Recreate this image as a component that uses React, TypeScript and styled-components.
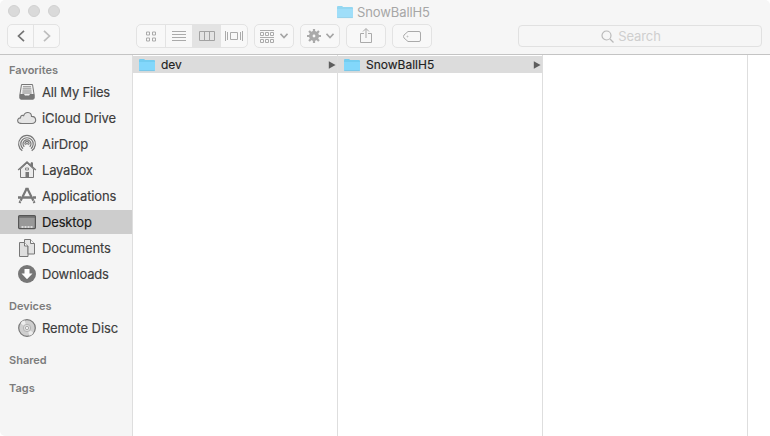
import React from "react";
import styled, { createGlobalStyle } from "styled-components";

const GlobalStyle = createGlobalStyle`
  * { box-sizing: border-box; }
  body { margin: 0; background: #fff; overflow: hidden; font-family: Inter, "Liberation Sans", sans-serif; }
  svg { display: block; flex: none; }
`;

const Window = styled.div`
  display: flex;
  flex-direction: column;
  width: 770px;
  height: 436px;
  border-radius: 5px;
  overflow: hidden;
  background: #fff;
`;

const Header = styled.header`
  flex: none;
  height: 55px;
  background: #f6f6f6;
  border-bottom: 1px solid #c4c4c4;
`;

const TitleBar = styled.div`
  display: grid;
  grid-template-columns: 337px 1fr;
  align-items: center;
  height: 24px;
`;

const Lights = styled.div`
  display: flex;
  gap: 8px;
  padding: 0 0 2px 8px;
`;

const Light = styled.span`
  width: 12px;
  height: 12px;
  border-radius: 50%;
  background: #dadada;
  border: 1px solid #d0d0d0;
`;

const Title = styled.div`
  display: flex;
  align-items: center;
  gap: 4px;
  height: 23px;
  font-size: 13px;
  line-height: 23px;
  color: #a6a6a6;
`;

const Text = styled.span<{ $track?: number }>`
  white-space: nowrap;
  letter-spacing: ${(p) => p.$track ?? 0}px;
`;

const Toolbar = styled.div`
  display: flex;
  align-items: flex-start;
  padding-left: 7px;
`;

const Group = styled.div<{ $after: number }>`
  display: flex;
  height: 24px;
  border: 1px solid #e3e3e3;
  border-radius: 5px;
  margin-right: ${(p) => p.$after}px;
  overflow: hidden;
  background: #f8f8f8;
`;

const ToolButton = styled.button<{ $w: number; $active?: boolean }>`
  display: flex;
  align-items: center;
  justify-content: center;
  width: ${(p) => p.$w}px;
  padding: 0;
  border: 0;
  background: ${(p) => (p.$active ? "#e3e3e3" : "transparent")};
  & + & { border-left: 1px solid #e3e3e3; }
`;

const Search = styled.div`
  display: flex;
  align-items: center;
  justify-content: center;
  gap: 4px;
  width: 244px;
  height: 22px;
  margin-top: 1px;
  padding-right: 34px;
  padding-left: 16px;
  border: 1px solid #e1e1e1;
  border-radius: 4px;
  font-size: 13px;
  color: #cfcfcf;
`;

const Body = styled.div`
  display: flex;
  flex: 1;
  min-height: 0;
`;

const Sidebar = styled.nav`
  width: 133px;
  background: #f5f5f5;
  border-right: 1px solid #dedede;
`;

const Section = styled.section<{ $top: number }>`
  padding-top: ${(p) => p.$top}px;
`;

const Heading = styled.h2`
  margin: 0;
  padding-left: 9px;
  font-size: 11px;
  line-height: 16px;
  font-weight: 600;
  color: #7c7c7c;
`;

const Item = styled.div<{ $active?: boolean }>`
  display: flex;
  align-items: center;
  gap: 5px;
  height: 24px;
  margin-top: 2px;
  padding-left: 17px;
  font-size: 13px;
  color: ${(p) => (p.$active ? "#181818" : "#3c3c3c")};
  background: ${(p) => (p.$active ? "#cdcdcd" : "transparent")};
  -webkit-text-stroke: 0.15px currentColor;
`;

const Column = styled.div`
  width: 205px;
  padding-top: 1px;
  border-right: 1px solid #dedede;
`;

const FileRow = styled.div`
  display: flex;
  align-items: center;
  height: 17px;
  padding: 0 1px 0 6px;
  gap: 6px;
  background: #dcdcdc;
  font-size: 12px;
  line-height: 17px;
  color: #222;
  -webkit-text-stroke: 0.15px currentColor;
  svg:last-child { margin-left: auto; }
`;

const Folder = ({ faded = false }: { faded?: boolean }) => (
  <svg width="16" height="14" viewBox="0 0 16 14" opacity={faded ? 0.75 : 1}>
    <path d="M0 2.2Q0 1 1 1h4l1.2 1H15q1 0 1 1v9q0 1-1 1H1q-1 0-1-1z" fill="#74cdf0" />
    <path d="M0 4h16v8q0 1-1 1H1q-1 0-1-1z" fill="#82d7fb" />
    <path d="M.5 12.6h15" stroke="#78c2e0" strokeWidth=".8" />
  </svg>
);

const Arrow = () => (
  <svg width="8" height="8" viewBox="0 0 8 8"><path d="M.8 .2 7.6 4 .8 7.8z" fill="#5d5d5d" /></svg>
);

const Glyph = ({ w, h = 18, color = "#aaa", children }: { w: number; h?: number; color?: string; children: React.ReactNode }) => (
  <svg width={w} height={h} viewBox={`0 0 ${w} ${h}`} fill="none" stroke={color}>{children}</svg>
);

const Chevron = () => (
  <Glyph w={8} h={6} color="#a5a5a5"><path d="m.5 .8 3.500 3.700L7.500 .8" strokeWidth="1.6" /></Glyph>
);

const Spaced = styled.span<{ $gap: number }>`
  display: flex;
  align-items: center;
  gap: ${(p) => p.$gap}px;
`;

const teeth = [0, 45, 90, 135, 180, 225, 270, 315];

const icons = {
  files: (
    <>
      <path d="M4.5 2.5h11l1.5 9.5v4q0 1-1 1H4q-1 0-1-1v-4z" fill="#f1f1f1" />
      <path d="M6 4.8h8M5.7 6.9h8.6M5.5 9h9M5.3 11h9.4" strokeWidth=".9" />
      <path d="M3 12.5h4q.5 1.5 1.5 1.5h3q1 0 1.5-1.5h4V16q0 1-1 1H4q-1 0-1-1z" fill="#777" />
    </>
  ),
  cloud: <path d="M5 15.5c-5.5 0-5.5-5.3-1.5-5.6 0-2.5 2-3 3.2-2.2C8 3 14.5 3.5 14.5 8.4c5.5.2 5.5 7.1.4 7.1z" fill="#e5e5e5" strokeWidth="1.1" />,
  airdrop: (
    <>
      <path d="M5.3 16.8a8.4 8.4 0 1 1 9.4 0" strokeWidth="1.2" />
      <path d="M6 14.7a6.2 6.2 0 1 1 8 0" strokeWidth="1.2" />
      <path d="M7.3 12.8a4 4 0 1 1 5.4 0" strokeWidth="1.2" />
      <path d="M8.5 10.8a2 2 0 1 1 3 0" strokeWidth="1.2" />
      <circle cx="10" cy="9.7" r=".9" fill="#777" stroke="none" />
    </>
  ),
  home: (
    <>
      <path d="M14 5.5V2.8h1.5V7" fill="#777" />
      <path d="M3.5 9v8.5h13V9L10 3z" fill="#ececec" />
      <path d="M1.2 10 10 2l8.8 8" strokeWidth="1.5" />
      <path d="M8.5 8h3v2h-3z" strokeWidth=".8" />
      <path d="M8.5 12H12v5.5H8.5z" fill="#777" stroke="none" />
    </>
  ),
  apps: (
    <>
      <path d="M9.7 2.5 2.5 17M10.3 2.5 17.5 17" strokeWidth="2.2" />
      <path d="M1 11.5h3M6 11.5h8M16 11.5h3" strokeWidth="2.4" />
      <path d="M8.5 2.5h3" strokeWidth="1.5" />
      <path d="m3 14.8 2 1M17 14.8l-2 1" stroke="#f5f5f5" strokeWidth=".8" />
    </>
  ),
  desktop: (
    <>
      <rect x="1.6" y="3.6" width="16.8" height="13" rx="1" fill="#999" stroke="#565656" strokeWidth="1.2" />
      <path d="M2 5h16" strokeWidth="1.2" stroke="#5b5b5b" />
      <path d="M4.5 15h11" stroke="#eee" strokeWidth="1.6" strokeDasharray="2 1" />
    </>
  ),
  docs: (
    <>
      <path d="M2.5 4.5h5L11 8v10.5H2.5z" fill="#dedede" />
      <path d="M7.5 1.5h6l4 4V16H11V8L7.5 4.5z" fill="#e3e3e3" />
      <path d="M13.5 1.5v4h4" fill="#f7f7f7" />
      <path d="M7.5 4.5V8H11" fill="#f7f7f7" />
    </>
  ),
  down: (
    <>
      <circle cx="10" cy="10" r="9" fill="#777" stroke="none" />
      <path d="M7.5 5h5v4.5h3L10 15.2 4.5 9.5h3z" fill="#fff" stroke="none" />
    </>
  ),
  disc: (
    <>
      <circle cx="10" cy="10" r="8.3" fill="#cfcfcf" strokeWidth="1.2" />
      <path d="M10 10 3.5 5.3Q5 3 7.5 2.3zM10 10l6.500 4.7q-1.5 2.3-4 3z" fill="#ededed" stroke="none" />
      <circle cx="10" cy="10" r="3.7" fill="#ddd" stroke="#aaa" strokeWidth=".8" />
      <circle cx="10" cy="10" r="1.6" fill="#f7f7f7" stroke="#999" strokeWidth=".8" />
    </>
  ),
};

const favorites: { icon: keyof typeof icons; label: string; track: number; active?: boolean }[] = [
  { icon: "files", label: "All My Files", track: -0.17 },
  { icon: "cloud", label: "iCloud Drive", track: -0.1 },
  { icon: "airdrop", label: "AirDrop", track: -0.15 },
  { icon: "home", label: "LayaBox", track: -0.2 },
  { icon: "apps", label: "Applications", track: -0.12 },
  { icon: "desktop", label: "Desktop", track: -0.15, active: true },
  { icon: "docs", label: "Documents", track: -0.13 },
  { icon: "down", label: "Downloads", track: -0.2 },
];

const SideIcon = ({ name }: { name: keyof typeof icons }) => (
  <Glyph w={20} h={20} color="#777">{icons[name]}</Glyph>
);

export default function App() {
  return (
    <>
      <GlobalStyle />
      <Window>
        <Header>
          <TitleBar>
            <Lights><Light /><Light /><Light /></Lights>
            <Title><Folder faded /><Text $track={-0.1}>SnowBallH5</Text></Title>
          </TitleBar>
          <Toolbar>
            <Group $after={76}>
              <ToolButton $w={25} aria-label="Back"><Glyph w={8} h={12} color="#747474"><path d="M7 .8 1.5 6 7 11.2" strokeWidth="1.7" /></Glyph></ToolButton>
              <ToolButton $w={26} aria-label="Forward"><Glyph w={8} h={12} color="#bdbdbd"><path d="M1 .8 6.5 6 1 11.2" strokeWidth="1.7" /></Glyph></ToolButton>
            </Group>
            <Group $after={6}>
              <ToolButton $w={28} aria-label="Icons">
                <Glyph w={10} h={11}><path d="M.5 1h3v3h-3zM6.5 1h3v3h-3zM.5 7h3v3h-3zM6.5 7h3v3h-3z" /></Glyph>
              </ToolButton>
              <ToolButton $w={27} aria-label="List">
                <Glyph w={14} h={11}><path d="M0 .5h14M0 3.5h14M0 6.5h14M0 9.5h14" /></Glyph>
              </ToolButton>
              <ToolButton $w={28} $active aria-label="Columns">
                <Glyph w={16} h={10} color="#a2a2a2"><path d="M.5.5h15v9H.5zM5.5 1v8M10.5 1v8" /></Glyph>
              </ToolButton>
              <ToolButton $w={27} aria-label="Cover Flow">
                <Glyph w={18} h={10}><path d="M.5 0v10M2.5 1v8M5.5 1.5h7v7h-7zM15.5 1v8M17.5 0v10" /></Glyph>
              </ToolButton>
            </Group>
            <Group $after={6}>
              <ToolButton $w={38} aria-label="Arrange">
                <Spaced $gap={6}>
                  <Glyph w={14} h={13}><path d="M0 .5h14M.5 2.5h3v3h-3zM5.5 2.5h3v3h-3zM10.5 2.5h3v3h-3zM0 7.5h14M.5 9.5h3v3h-3zM5.5 9.5h3v3h-3zM10.5 9.5h3v3h-3z" /></Glyph>
                  <Chevron />
                </Spaced>
              </ToolButton>
            </Group>
            <Group $after={6}>
              <ToolButton $w={38} aria-label="Action">
                <Spaced $gap={5}>
                  <Glyph w={14} h={14}>
                    <circle cx="7" cy="7" r="3.2" strokeWidth="3.6" />
                    {teeth.map((a) => <path key={a} d="M7 0v3" strokeWidth="2.2" transform={`rotate(${a} 7 7)`} />)}
                  </Glyph>
                  <Chevron />
                </Spaced>
              </ToolButton>
            </Group>
            <Group $after={6}>
              <ToolButton $w={38} aria-label="Share">
                <Glyph w={12} h={16}><path d="M4 5.5H.5v9h11v-9H8M6 10V.8M3 3.500l3-3 3 3" /></Glyph>
              </ToolButton>
            </Group>
            <Group $after={86}>
              <ToolButton $w={38} aria-label="Tags">
                <Glyph w={18} h={11}><path d="M5 .5h11q1.500 0 1.500 1.500v7q0 1.500-1.500 1.500H5L1 7Q0 5.500 1 4z" /><circle cx="4.500" cy="5.500" r=".5" strokeWidth=".7" /></Glyph>
              </ToolButton>
            </Group>
            <Search>
              <Glyph w={13} h={13} color="#b9b9b9"><circle cx="5.500" cy="5.500" r="4.500" strokeWidth="1.200" /><path d="m9 9 3.500 3.500" strokeWidth="1.300" /></Glyph>
              <Text $track={-0.1}>Search</Text>
            </Search>
          </Toolbar>
        </Header>
        <Body>
          <Sidebar>
            <Section $top={7}>
              <Heading><Text>Favorites</Text></Heading>
              {favorites.map((f) => (
                <Item key={f.label} $active={f.active}>
                  <SideIcon name={f.icon} />
                  <Text $track={f.track}>{f.label}</Text>
                </Item>
              ))}
            </Section>
            <Section $top={12}>
              <Heading><Text>Devices</Text></Heading>
              <Item><SideIcon name="disc" /><Text $track={-0.1}>Remote Disc</Text></Item>
            </Section>
            <Section $top={12}><Heading><Text>Shared</Text></Heading></Section>
            <Section $top={12}><Heading><Text>Tags</Text></Heading></Section>
          </Sidebar>
          <Column><FileRow><Folder /><Text>dev</Text><Arrow /></FileRow></Column>
          <Column><FileRow><Folder /><Text>SnowBallH5</Text><Arrow /></FileRow></Column>
          <Column />
        </Body>
      </Window>
    </>
  );
}
